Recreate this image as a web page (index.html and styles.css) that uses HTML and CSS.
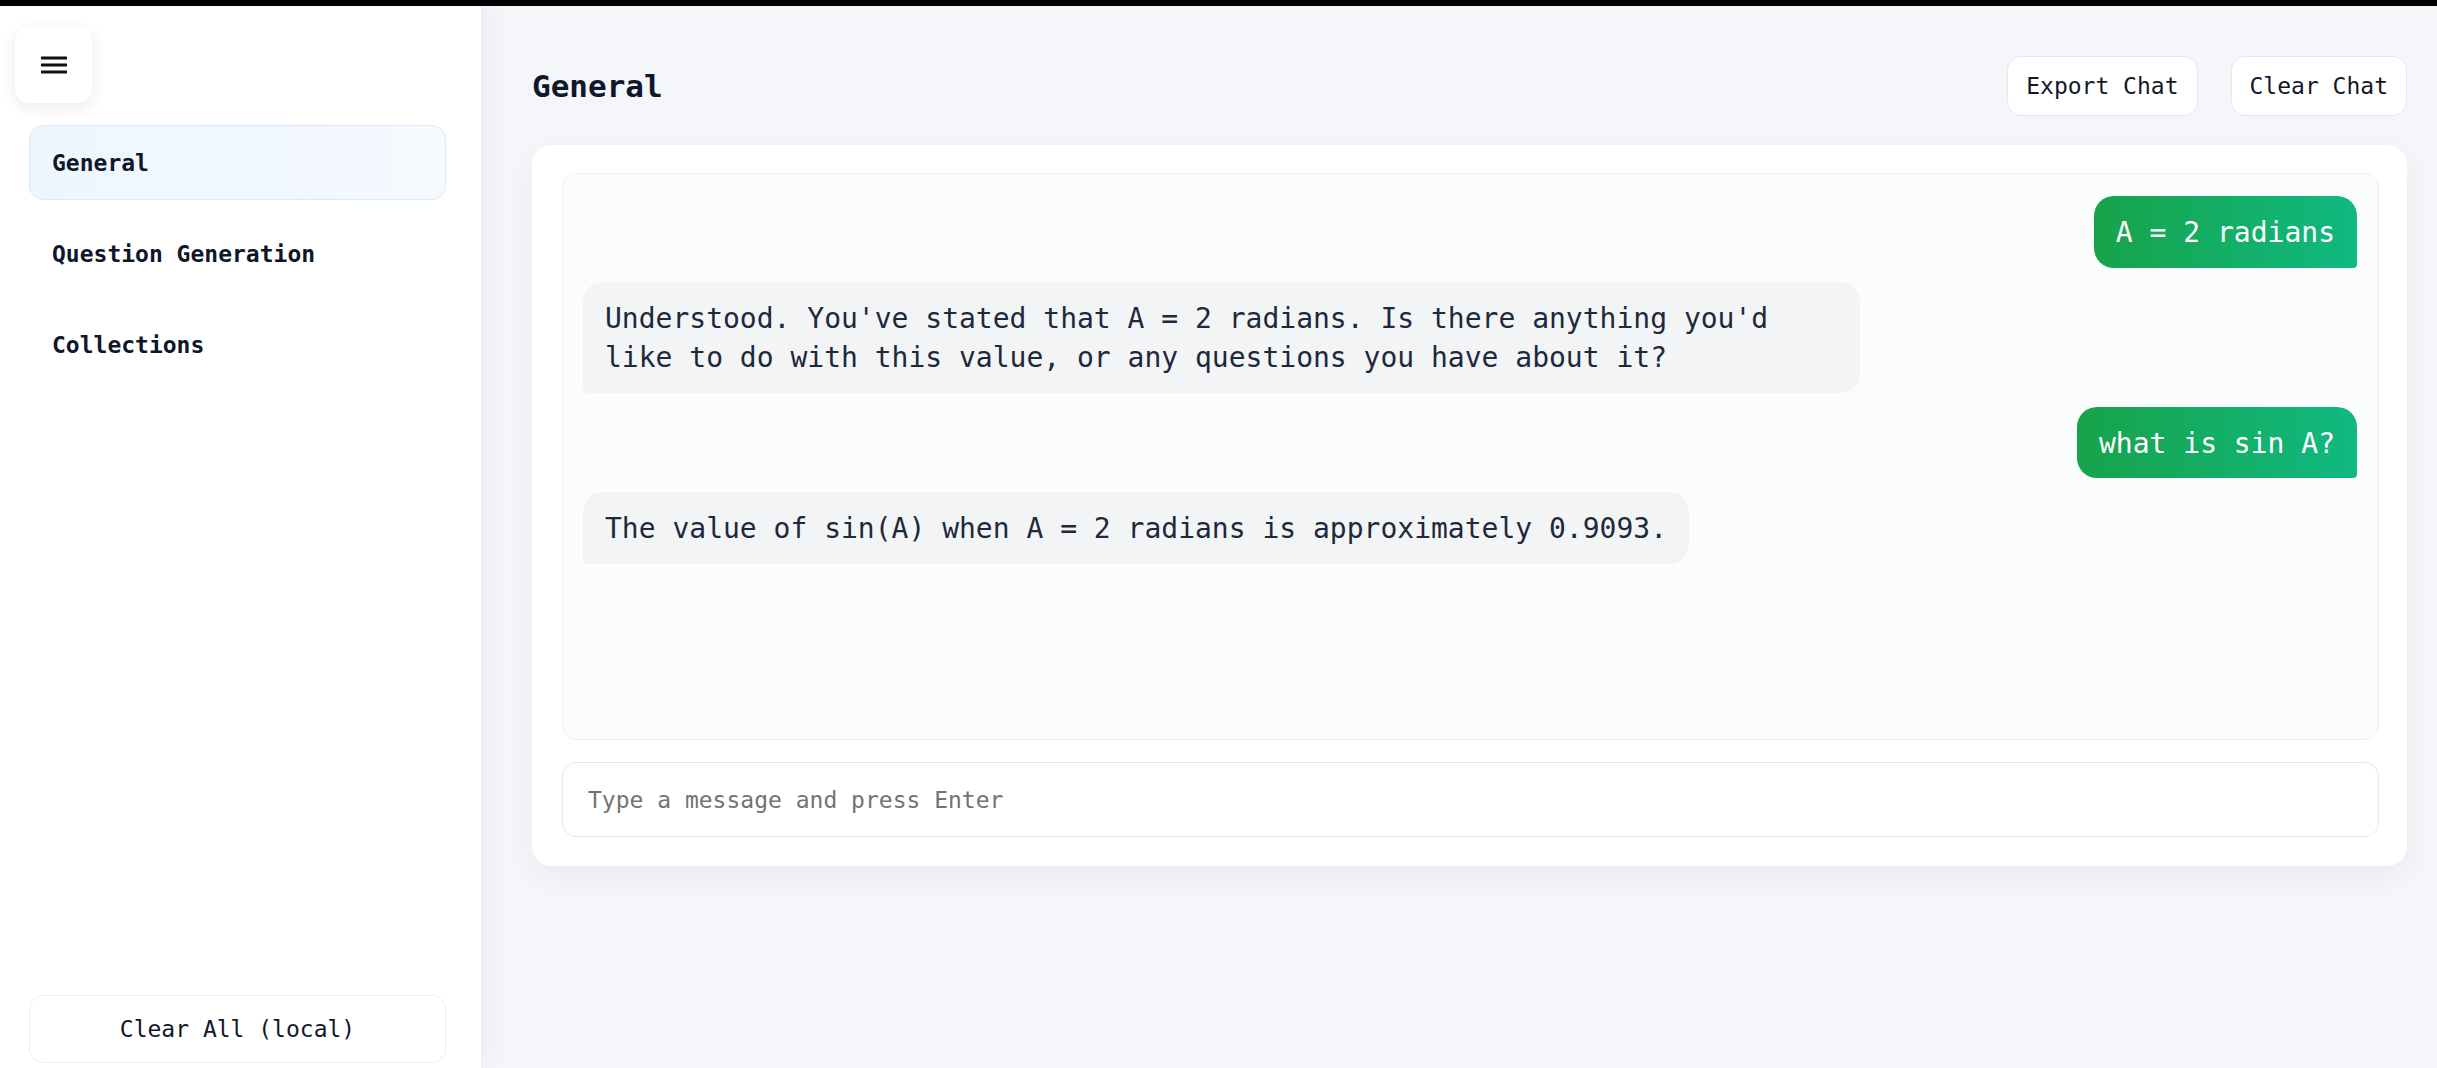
FILE: index.html
```html
<!DOCTYPE html>
<html lang="en">
<head>
<meta charset="utf-8">
<title>General</title>
<link rel="stylesheet" href="styles.css">
</head>
<body>
<div class="topbar"></div>
<aside class="sidebar">
  <button class="menu-btn" aria-label="Menu">
    <svg width="26" height="20" viewBox="0 0 26 20"><rect x="0" y="1.5" width="26" height="3" rx="0.5" fill="#111"/><rect x="0" y="8.5" width="26" height="3" rx="0.5" fill="#111"/><rect x="0" y="15.5" width="26" height="3" rx="0.5" fill="#111"/></svg>
  </button>
  <nav class="nav">
    <div class="nav-item active">General</div>
    <div class="nav-item">Question Generation</div>
    <div class="nav-item">Collections</div>
  </nav>
  <div class="sidebar-footer">
    <button class="clear-all">Clear All (local)</button>
  </div>
</aside>
<main class="main">
  <header class="header">
    <h1 class="title">General</h1>
    <div class="actions">
      <button class="btn">Export Chat</button>
      <button class="btn">Clear Chat</button>
    </div>
  </header>
  <section class="card">
    <div class="messages">
      <div class="bubble user">A = 2 radians</div>
      <div class="bubble bot">Understood. You've stated that A = 2 radians. Is there anything you'd like to do with this value, or any questions you have about it?</div>
      <div class="bubble user">what is sin A?</div>
      <div class="bubble bot">The value of sin(A) when A = 2 radians is approximately 0.9093.</div>
    </div>
    <input class="composer" type="text" placeholder="Type a message and press Enter">
  </section>
</main>
</body>
</html>
```

FILE: styles.css
```css
* { box-sizing: border-box; }

html, body {
  margin: 0;
  height: 100%;
}

body {
  display: flex;
  height: 100vh;
  overflow: hidden;
  font-family: "DejaVu Sans Mono", "Liberation Mono", monospace;
  color: #0f172a;
  background: #f4f6fa;
}

.topbar {
  position: fixed;
  top: 0;
  left: 0;
  right: 0;
  height: 6px;
  background: #000;
  z-index: 10;
}

.sidebar {
  width: 482px;
  flex-shrink: 0;
  display: flex;
  flex-direction: column;
  padding: 27px 35px 5px 15px;
  background: #ffffff;
  border-right: 1px solid #eceff5;
  box-shadow: 6px 0 24px rgba(15, 23, 42, 0.04);
  position: relative;
  z-index: 1;
}

.menu-btn {
  width: 77px;
  height: 76px;
  border: none;
  border-radius: 14px;
  background: #ffffff;
  box-shadow: 0 4px 16px rgba(15, 23, 42, 0.09);
  display: flex;
  align-items: center;
  justify-content: center;
  padding: 0;
}

.nav {
  margin: 22px 0 0 14px;
  display: flex;
  flex-direction: column;
  gap: 16px;
}

.nav-item {
  height: 75px;
  display: flex;
  align-items: center;
  padding-left: 22px;
  border: 1px solid transparent;
  border-radius: 14px;
  font-size: 23px;
  font-weight: bold;
  color: #0f172a;
}

.nav-item.active {
  background: linear-gradient(90deg, #edf6ff 0%, #f2f8ff 60%, #f6f9fe 100%);
  border-color: #d9ebfb;
}

.sidebar-footer {
  margin: auto 0 0 14px;
}

.clear-all {
  width: 100%;
  height: 68px;
  border: 1px solid #e9eef4;
  border-radius: 14px;
  background: #ffffff;
  font-family: inherit;
  font-size: 23px;
  color: #111827;
}

.main {
  flex: 1;
  display: flex;
  flex-direction: column;
  padding: 56px 30px 0 50px;
  background: #f4f6fa;
}

.header {
  height: 60px;
  display: flex;
  align-items: center;
  justify-content: space-between;
}

.title {
  margin: 0;
  font-size: 31px;
  font-weight: bold;
  color: #0f172a;
}

.actions {
  display: flex;
  gap: 33px;
}

.btn {
  height: 60px;
  padding: 0 18px;
  border: 1px solid #e2e9f3;
  border-radius: 14px;
  background: #ffffff;
  font-family: inherit;
  font-size: 23px;
  color: #111827;
}

.card {
  margin-top: 29px;
  height: 721px;
  display: flex;
  flex-direction: column;
  gap: 22px;
  padding: 28px 28px 29px 30px;
  background: #ffffff;
  border-radius: 20px;
  box-shadow: 0 10px 30px rgba(15, 23, 42, 0.05);
}

.messages {
  flex: 1;
  display: flex;
  flex-direction: column;
  gap: 14px;
  padding: 22px 21px 22px 20px;
  border: 1px solid #edf1f7;
  border-radius: 14px;
  background: #fbfcfe;
}

.bubble {
  max-width: 72%;
  padding: 17px 22px 15px;
  font-size: 28px;
  line-height: 39.5px;
}

.bubble.user {
  align-self: flex-end;
  color: #ffffff;
  background: linear-gradient(90deg, #17a34a 0%, #10b981 100%);
  border-radius: 20px 20px 4px 20px;
}

.bubble.bot {
  align-self: flex-start;
  color: #1e293b;
  background: #f3f4f6;
  border-radius: 20px 20px 20px 4px;
}

.composer {
  height: 75px;
  width: 100%;
  padding: 0 25px;
  border: 1px solid #e3e9f2;
  border-radius: 14px;
  background: #ffffff;
  font-family: inherit;
  font-size: 23px;
  color: #111827;
  outline: none;
}

.composer::placeholder {
  color: #737373;
}
```
